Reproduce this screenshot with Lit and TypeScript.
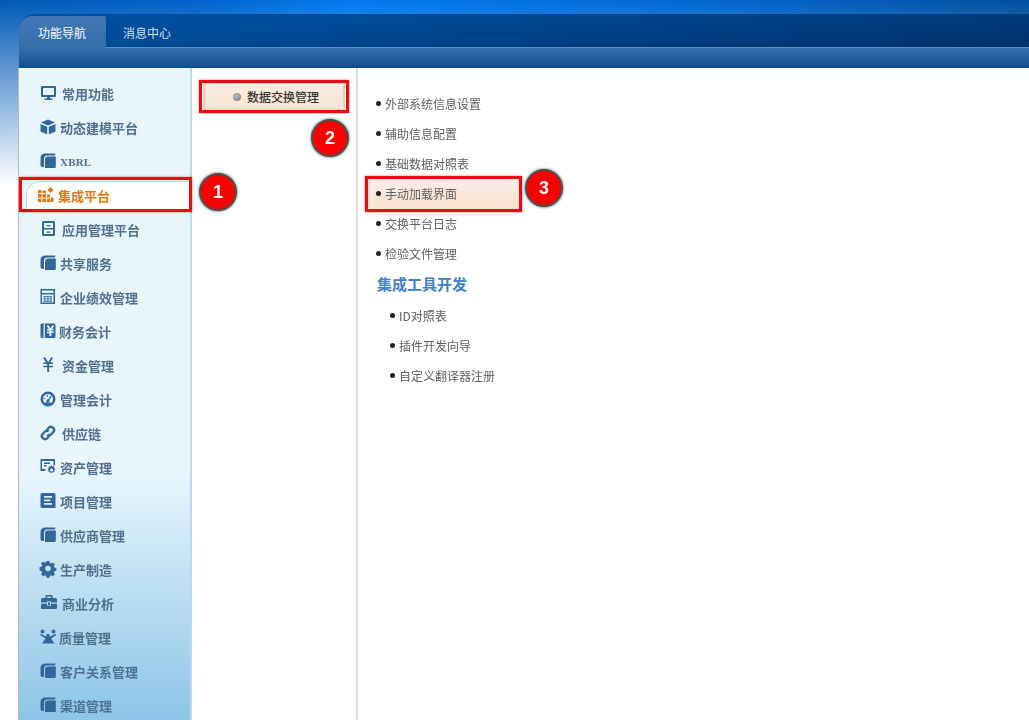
import { LitElement, html, css, svg } from "lit";
import { customElement } from "lit/decorators.js";

const folder = svg`<path d="M5 .5h10.500l-.6 2H7C5 2.500 4 4 4 6v8H2.500C1 14 .5 13 .5 11.500V5C.5 2 2.500.5 5 .5z"/><path d="M8 3.500h7.800V13.500c0 1-.6 1.500-1.500 1.500H5V6.500C5 4.500 6 3.500 8 3.500z"/>`;

const icons: Record<string, unknown> = {
  monitor: svg`<path fill-rule="evenodd" d="M2 1h13a1 1 0 0 1 1 1v9a1 1 0 0 1-1 1H10v1.500h2.500V15h-8v-1.500H7V12H2a1 1 0 0 1-1-1V2a1 1 0 0 1 1-1zm1 2v7h11V3z"/>`,
  cube: svg`<path d="M8 .5l7 3-7 3-7-3zM.5 5l6.700 2.800V15.500L.5 12.500zM15.500 5L8.800 7.800V15.500l6.700-3z"/>`,
  folder,
  server: svg`<path fill-rule="evenodd" d="M3.500 0h10A1.500 1.500 0 0 1 15 1.500v12a1.500 1.500 0 0 1-1.500 1.500h-10A1.500 1.500 0 0 1 2 13.500v-12A1.500 1.500 0 0 1 3.500 0zM4 2v5h9V2zm0 6.500V13h9V8.500zM6.500 4h4v1.300h-4zm0 6.500h4v1.300h-4z"/>`,
  calc: svg`<path fill-rule="evenodd" d="M.5 0h14.500v15H.5zM2 1.500v2.500h11.500V1.500zm0 4V13.500h11.500V5.500zM3.500 7h2.300v1.500H3.500zm3 0h2.300v1.500H6.500zm3 0h2.300v1.500H9.500zM3.500 9.300h2.300v1.500H3.500zm3 0h2.300v1.500H6.500zm3 0h2.300v1.500H9.500zM3.500 11.500h2.300V13H3.500zm3 0h2.300V13H6.500zm3 0h2.300V13H9.500z"/>`,
  yenbox: svg`<path fill-rule="evenodd" d="M2 .5h3L3.600 1.600 3.500 15H2A1.500 1.500 0 0 1 .5 13.500V2A1.500 1.500 0 0 1 2 .5zM6 .5h8A1.500 1.500 0 0 1 15.500 2V13.500A1.500 1.500 0 0 1 14 15H4.800V2C4.800 1.200 5.200.5 6 .5zM6.500 2.500l2.300 3.700H7v1.500h2.400v1H7v1.500h2.400V13h2v-3.300h2.400V8.200h-2.400v-1h2.400V6.200H12l2.300-3.700h-2.200L10.400 5.600 8.700 2.500z"/>`,
  yen: svg`<path d="M3 .5h2.300l2.900 4.800L11 .5h2.200L10.200 5.500h2.800V7H9.100v1.700H13v1.500H9.100V15H7.200v-4.800H3.300V8.700h3.900V7H3.300V5.500H6z"/>`,
  gauge: svg`<path fill-rule="evenodd" d="M8 .5a7.500 7.500 0 1 1 0 15 7.500 7.500 0 0 1 0-15zM8 3a5 5 0 0 0-4.800 6.500L4 11.500h8l.8-2A5 5 0 0 0 8 3zM11 4.500l1 .6-2.600 4a1.600 1.600 0 1 1-1.300-.9zM3.800 7h1.500v1.300H3.800zM6.800 4h1.300v1.500H6.800z"/>`,
  link: svg`<path fill="none" stroke="currentColor" stroke-width="2.400" d="M6.800 5l2.300-2.500a2.500 2.500 0 0 1 3.600 0l.8.800a2.500 2.500 0 0 1 0 3.600L10.900 9.500a2.500 2.500 0 0 1-3.500 0M9.200 11l-2.300 2.500a2.500 2.500 0 0 1-3.600 0l-.8-.8a2.500 2.500 0 0 1 0-3.600L5.100 6.500a2.500 2.500 0 0 1 3.500 0"/>`,
  asset: svg`<path fill-rule="evenodd" d="M.5 0h14.500v6.500h-1.500V2H2v8h3.500v2H.5zM4 3.500h6V5H4zm0 2.500h2.500v1.500H4z"/><path fill-rule="evenodd" d="M11 6.500l1.200 0 .3 1.300 1.100-.5.900.9-.6 1.100 1.300.4v1.300l-1.300.4.600 1.100-.9.900-1.100-.6-.4 1.300H10.800l-.4-1.300-1.100.6-.9-.9.600-1.100-1.300-.4v-1.300l1.300-.4-.6-1.100.9-.9 1.100.5zm.6 3a1.500 1.500 0 1 0 0 3 1.500 1.500 0 0 0 0-3z"/>`,
  book: svg`<path fill-rule="evenodd" d="M2.500 0H14a1.500 1.500 0 0 1 1.500 1.500V15H2.500A1.500 1.500 0 0 1 .5 13.500v-12A1.500 1.500 0 0 1 2.500 0zM4 3v1.800h8V3zm0 3.500v1.800h6.500V6.500zm0 3.500v1.800h8V10z"/>`,
  gear: svg`<path fill-rule="evenodd" d="M6.600 0h2.800l.4 2 1.400.6L12.900 1.500l2 2-1.100 1.700.6 1.400 2 .4v2.800l-2 .4-.6 1.400 1.100 1.700-2 2-1.700-1.100-1.400.6-.4 2H6.600l-.4-2-1.400-.6-1.700 1.100-2-2 1.100-1.700-.6-1.400-2-.4V6.100l2-.4.600-1.400L1.100 2.600l2-2 1.700 1.100 1.400-.6zM8 4.700a2.800 2.800 0 1 0 0 5.600 2.800 2.800 0 0 0 0-5.600z"/>`,
  case: svg`<path fill-rule="evenodd" d="M6.500 0h5a1 1 0 0 1 1 1v2h3A1.500 1.500 0 0 1 17 4.500V7.500H11V6.500H7v1H1V4.500A1.500 1.500 0 0 1 2.500 3h3V1a1 1 0 0 1 1-1zm.7 1.400V3h3.600V1.400zM1 8.800h6v2h4v-2h6V13a1 1 0 0 1-1 1H2a1 1 0 0 1-1-1zM8 7.500h2V10H8z"/>`,
  scale: svg`<circle cx="2.500" cy="2.500" r="2"/><circle cx="13.500" cy="2.500" r="2"/><path d="M.5 4.800l6 3V5h3v2.800l6-3 .5 1.500-5 3.200 3.500 5H2l3.500-5-5-3.200z"/>`,
};

type Row = { label: string; icon: string; gap: number; latin?: boolean };
const rows: Row[] = [
  { label: "常用功能", icon: "monitor", gap: 6 },
  { label: "动态建模平台", icon: "cube", gap: 4 },
  { label: "XBRL", icon: "folder", gap: 4, latin: true },
  { label: "集成平台", icon: "active", gap: 4 },
  { label: "应用管理平台", icon: "server", gap: 6 },
  { label: "共享服务", icon: "folder", gap: 4 },
  { label: "企业绩效管理", icon: "calc", gap: 4 },
  { label: "财务会计", icon: "yenbox", gap: 3 },
  { label: "资金管理", icon: "yen", gap: 6 },
  { label: "管理会计", icon: "gauge", gap: 4 },
  { label: "供应链", icon: "link", gap: 6 },
  { label: "资产管理", icon: "asset", gap: 4 },
  { label: "项目管理", icon: "book", gap: 4 },
  { label: "供应商管理", icon: "folder", gap: 4 },
  { label: "生产制造", icon: "gear", gap: 4 },
  { label: "商业分析", icon: "case", gap: 6 },
  { label: "质量管理", icon: "scale", gap: 3 },
  { label: "客户关系管理", icon: "folder", gap: 4 },
  { label: "渠道管理", icon: "folder", gap: 4 },
];

const links = ["外部系统信息设置", "辅助信息配置", "基础数据对照表", "手动加载界面", "交换平台日志", "检验文件管理"];
const subLinks = ["ID对照表", "插件开发向导", "自定义翻译器注册"];

@customElement("app-root")
export class AppRoot extends LitElement {
  static styles = css`
    :host {
      display: block;
      width: 100%;
      height: 720px;
      overflow: hidden;
      font-family: "Noto Sans CJK SC", "Liberation Sans", sans-serif;
      background: linear-gradient(180deg, transparent 0, #fff 185px),
        linear-gradient(90deg, #0059b4 0, #0062cc 200px, #007aee 350px, #0067d0 700px, #004f9f 1029px);
    }
    .page { padding: 14px 0 0 19px; filter: blur(0.3px); }
    .tabs {
      height: 33px;
      border-radius: 16px 0 0 0;
      background: linear-gradient(175deg, #004f9f 0, #004b98 30%, #00316b 100%);
      display: flex;
      align-items: flex-end;
    }
    .tab {
      width: 87px;
      height: 31px;
      box-sizing: border-box;
      padding: 5px 0 0 19px;
      font-size: 12px;
      line-height: 24px;
      color: #e8f0f8;
      white-space: nowrap;
    }
    .tab.on {
      position: relative;
      height: 32px;
      margin-bottom: -1px;
      background: linear-gradient(180deg, #4079b4, #346fab);
      border-radius: 14px 2px 0 0;
      color: #fff;
    }
    .tab.off { padding-left: 17px; color: #d3e0ee; }
    .subbar {
      height: 21px;
      box-sizing: border-box;
      border-top: 1px solid #5f8fc4;
      background: linear-gradient(180deg, #3370ab, #124f92);
      border-bottom: 1px solid #114a88;
    }
    .body { display: flex; align-items: stretch; height: 652px; background: #fff; }
    .side {
      width: 174px;
      box-sizing: border-box;
      padding-top: 8px;
      border-left: 1px solid #b9b9b9;
      border-right: 2px solid #bcd8ee;
      margin-left: -1px;
      background: linear-gradient(180deg, #e8f6fc 0, #e8f6fc 405px, #8cc5e7 652px);
      flex: none;
    }
    .row {
      position: relative;
      height: 34px;
      display: flex;
      align-items: center;
      padding-left: 21px;
      font-size: 13px;
      font-weight: 700;
      color: #4f7090;
      white-space: nowrap;
    }
    .row svg { flex: none; width: 16px; height: 16px; fill: #336699; color: #336699; overflow: visible; }
    .latin { font-family: "Liberation Serif", serif; font-size: 11px; letter-spacing: 0.2px; padding-top: 2px; }
    .row.active { color: #e8750f; }
    .row.active::before {
      content: "";
      position: absolute;
      left: 7px;
      right: 0;
      top: 3px;
      bottom: 0;
      background: #fff;
      border-radius: 14px 0 0 0;
      border-left: 1px solid #c6d6e2;
      border-top: 1px solid #c6d6e2;
    }
    .row.active svg, .row.active span { position: relative; }
    .row.active svg { left: -2px; margin-right: -2px; }
    .box {
      position: absolute;
      box-sizing: border-box;
      border: 3px solid #ee0a12;
      box-shadow: 0 0 2px #ff5a5a;
      pointer-events: none;
    }
    .row .box { left: 0; right: -2px; top: -1px; height: 35px; }
    .badge {
      position: absolute;
      width: 34px;
      height: 34px;
      border-radius: 50%;
      background: #fb0000;
      border: 2px solid #4f4f4f;
      color: #fff;
      font: 700 18px/34px "Liberation Sans", sans-serif;
      text-align: center;
      box-shadow: 0 0 2px 1px #aaa;
    }
    .row .badge { left: 180px; top: -5px; }
    .mid {
      width: 166px;
      box-sizing: border-box;
      flex: none;
      padding: 15px 0 0 11px;
      border-right: 2px solid #dcdcdc;
    }
    .btn {
      position: relative;
      width: 142px;
      height: 27px;
      box-sizing: border-box;
      border: 1px solid #f1d4bf;
      border-left: 2px solid #f3cdb0;
      border-right: 2px solid #f3cdb0;
      background: linear-gradient(180deg, #f8ede3, #fbe3d2);
      display: flex;
      align-items: center;
      justify-content: center;
      gap: 6px;
      padding-left: 4px;
      font-size: 12px;
      font-weight: 500;
      color: #333;
      white-space: nowrap;
    }
    .dot {
      width: 8px;
      height: 8px;
      border-radius: 50%;
      background: radial-gradient(circle at 40% 35%, #bbb, #777);
    }
    .btn .box { left: -6px; right: -6px; top: -4px; bottom: -4px; }
    .btn .badge { left: 106px; top: 35px; }
    .main { flex: 1; padding: 20px 0 0 17px; }
    .link {
      position: relative;
      height: 30px;
      display: flex;
      align-items: center;
      gap: 4px;
      font-size: 12px;
      color: #606060;
      white-space: nowrap;
    }
    .link::before {
      content: "";
      position: relative;
      z-index: 1;
      width: 5px;
      height: 5px;
      border-radius: 50%;
      background: #222;
      margin-left: 1px;
    }
    .link span { position: relative; z-index: 1; }
    .link.sub { margin-left: 14px; }
    .hl {
      position: absolute;
      left: -4px;
      top: 1px;
      width: 147px;
      height: 30px;
      box-sizing: border-box;
      border-left: 2px solid #fff4ec;
      background: linear-gradient(180deg, #f9efe7, #fbe0cc);
    }
    .link .box { left: -10px; top: -2px; width: 157px; height: 36px; background: #f8dfcd; background-clip: padding-box; }
    .link .hl { z-index: 0; }
    .link .badge { left: 150px; top: -9px; }
    h3 {
      margin: 0 0 0 2px;
      height: 32px;
      line-height: 32px;
      font-size: 15px;
      font-weight: 700;
      color: #3f7fc5;
      white-space: nowrap;
    }
  `;

  private icon(name: string) {
    if (name === "active") {
      return html`<svg viewBox="0 0 16 16" style="fill:#e8750f">
        <path d="M0 3h3.500v3H0zM0 7h3.500v3.500H0zM0 11.500h3.500V15H0zM4.500 7H8v3.500H4.500zM4.500 11.500H8V15H4.500zM9 11.500h3.500V15H9zM9 7.500h3V10.500H9zM13 10.500h2.500V15H13z"/>
        <path d="M4.500 3.500H8v2.500H4.500zM12.500 0l3 3-3 3-3-3z"/>
      </svg>`;
    }
    return html`<svg viewBox="0 0 16 16">${icons[name]}</svg>`;
  }

  render() {
    return html`
      <div class="page">
        <div class="tabs">
          <div class="tab on">功能导航</div>
          <div class="tab off">消息中心</div>
        </div>
        <div class="subbar"></div>
        <div class="body">
          <nav class="side">
            ${rows.map(
              (r) => html`<div class="row ${r.icon === "active" ? "active" : ""}">
                ${this.icon(r.icon)}
                <span class="${r.latin ? "latin" : ""}" style="margin-left:${r.gap}px">${r.label}</span>
                ${r.icon === "active"
                  ? html`<i class="box"></i><div class="badge">1</div>`
                  : ""}
              </div>`
            )}
          </nav>
          <div class="mid">
            <div class="btn">
              <i class="dot"></i><span>数据交换管理</span>
              <i class="box"></i>
              <div class="badge">2</div>
            </div>
          </div>
          <div class="main">
            ${links.map((l, i) =>
              i === 3
                ? html`<div class="link hot">
                    <i class="box"></i>
                    <i class="hl"></i><span>${l}</span>
                    <div class="badge">3</div>
                  </div>`
                : html`<div class="link"><span>${l}</span></div>`
            )}
            <h3>集成工具开发</h3>
            ${subLinks.map((l) => html`<div class="link sub"><span>${l}</span></div>`)}
          </div>
        </div>
      </div>
    `;
  }
}
